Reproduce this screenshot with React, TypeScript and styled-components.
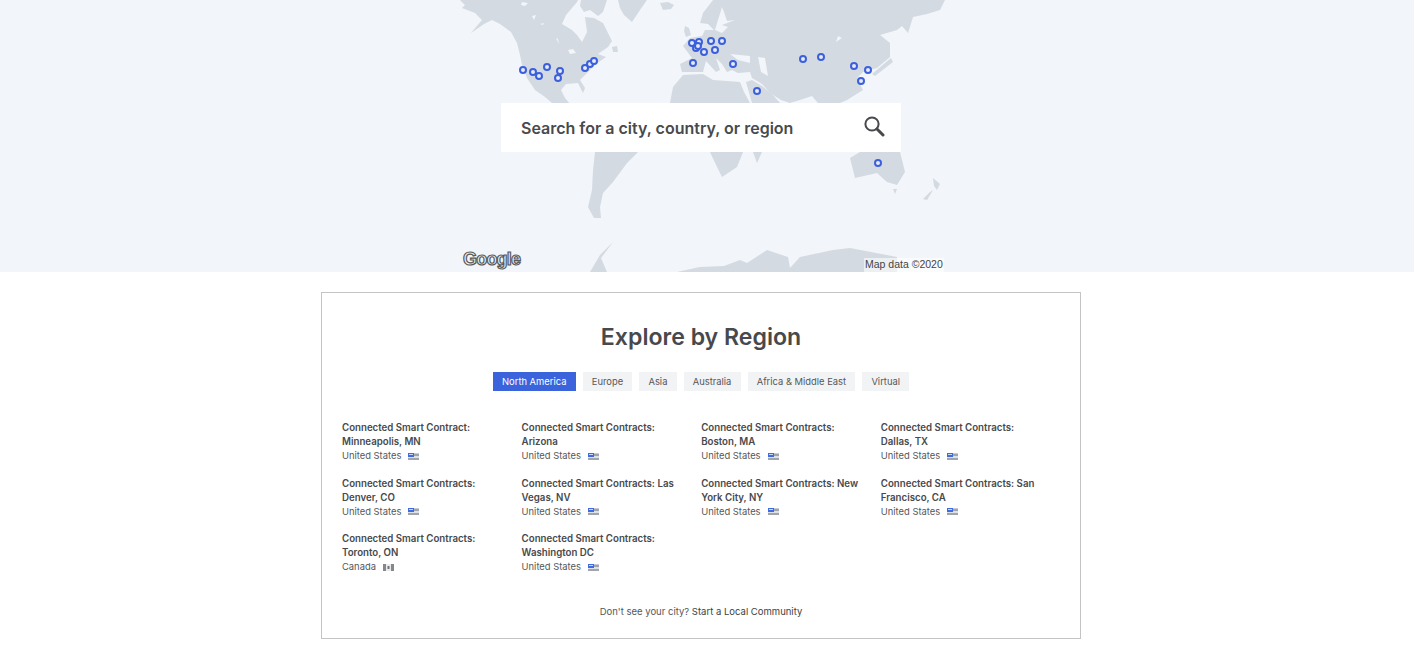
import React from "react";
import styled, { createGlobalStyle } from "styled-components";

const Global = createGlobalStyle`
  html, body { margin: 0; padding: 0; background: #fff; overflow: hidden; }
  * { box-sizing: border-box; }
`;

const Page = styled.div`
  width: 1414px;
  height: 649px;
  font-family: Inter, "Liberation Sans", sans-serif;
  color: #4a4a4a;
`;
const Hero = styled.section`
  position: relative;
  height: 272px;
  background: #f2f5fa;
  display: flex;
  justify-content: center;
  align-items: flex-start;
  padding: 103px 12px 0 0;
  overflow: hidden;
`;
const MapSvg = styled.svg`
  position: absolute;
  inset: 0;
`;
const SearchBox = styled.div`
  position: relative;
  width: 400px;
  height: 49px;
  background: #fff;
  display: flex;
  align-items: center;
  justify-content: space-between;
  padding: 0 16px 0 20px;
`;
const SearchText = styled.span`
  font-size: 16px;
  font-weight: 600;
  color: #484a4d;
`;
const SearchIcon = styled.svg`
  margin-top: -3px;
`;
const GoogleMark = styled.span`
  position: absolute;
  left: 463px;
  top: 249px;
  font-family: "Liberation Sans", sans-serif;
  font-size: 18px;
  font-weight: 700;
  letter-spacing: -0.8px;
  color: #eeeeee;
  -webkit-text-stroke: 1.2px #5a5a5a;
`;
const MapData = styled.span`
  position: absolute;
  left: 864px;
  top: 258px;
  width: 80px;
  height: 14px;
  padding-left: 1px;
  background: rgba(255, 255, 255, 0.6);
  font-family: "Liberation Sans", sans-serif;
  font-size: 10.5px;
  line-height: 13px;
  color: #444;
  white-space: nowrap;
`;
const Card = styled.section`
  width: 760px;
  height: 347px;
  margin: 20px 0 0 321px;
  border: 1px solid #c2c4c6;
  padding: 28px 20px 0;
`;
const Title = styled.h2`
  margin: 0;
  text-align: center;
  font-size: 23.1px;
  line-height: 32px;
  font-weight: 600;
  color: #47494c;
`;
const Tabs = styled.div`
  display: flex;
  justify-content: center;
  gap: 7px;
  margin-top: 19px;
`;
const Tab = styled.span<{ $active?: boolean }>`
  height: 19px;
  padding: 0 9.17px;
  font-size: 9.4px;
  line-height: 19px;
  white-space: nowrap;
  background: ${(p) => (p.$active ? "#3a63dc" : "#f2f3f5")};
  color: ${(p) => (p.$active ? "#fff" : "#55575a")};
`;
const Grid = styled.div`
  display: grid;
  grid-template-columns: repeat(4, 179.6px);
  grid-auto-rows: 42px;
  row-gap: 13.5px;
  margin-top: 30px;
`;
const Item = styled.div`
  font-size: 9.4px;
  line-height: 14px;
  padding-right: 18px;
`;
const ItemName = styled.div`
  font-size: 9.7px;
  font-weight: 600;
  color: #47494c;
`;
const Country = styled.div`
  display: flex;
  align-items: center;
  gap: 7px;
  color: #55575a;
`;
const Foot = styled.p`
  margin: 31px 0 0;
  text-align: center;
  font-size: 9.5px;
  line-height: 14px;
  color: #55575a;
`;
const FootLink = styled.span`
  color: #3c3e41;
`;

const land = [
  // North America
  "M460,0 L465,5 L462,8 L475,13 L482,20 L471,33 L484,24 L492,20 L500,24 L511,32 L517,43 L520,55 L522,65 L527,78 L535,90 L545,97 L552,103 L570,125 L575,110 L565,98 L561,90 L566,84 L578,83 L583,93 L585,88 L580,80 L588,72 L596,64 L606,57 L598,54 L608,47 L612,41 L603,23 L594,18 L585,17 L587,32 L582,42 L577,35 L572,30 L562,24 L566,15 L572,8 L577,2 L578,0 Z",
  // Newfoundland
  "M612,47 L617,46 L618,52 L613,52 Z",
  // Baffin and the arctic islands
  "M581,0 L607,0 L603,12 L598,16 L590,10 L584,12 L580,6 Z",
  // Greenland
  "M618,0 L647,0 L640,10 L632,22 L624,15 L620,8 Z",
  // Iceland
  "M660,3 L668,2 L674,5 L671,9 L663,10 Z",
  // UK and Ireland
  "M685,26 L689,28 L691,35 L686,37 L684,31 Z",
  // South America
  "M595,152 L638,152 L627,163 L613,182 L603,193 L600,207 L601,218 L594,218 L588,207 L592,190 L593,170 Z",
  // Eurasia
  "M713,0 L945,0 L940,10 L927,14 L913,17 L908,33 L902,26 L897,30 L880,35 L890,43 L890,57 L877,68 L863,72 L857,78 L863,90 L847,100 L840,103 L818,103 L812,96 L800,100 L790,103 L781,100 L770,93 L762,84 L752,78 L750,72 L738,73 L732,70 L727,72 L722,64 L716,58 L720,70 L716,72 L706,61 L703,72 L682,72 L680,64 L692,58 L683,46 L690,38 L702,36 L705,30 L714,30 L708,24 L700,23 L703,13 Z",
  // Africa
  "M670,103 L673,87 L683,75 L703,74 L713,80 L727,81 L740,82 L744,92 L750,103 Z",
  // Arabia
  "M746,82 L752,80 L762,86 L772,94 L780,103 L752,103 Z",
  "M710,152 L743,152 L737,167 L722,177 L717,167 Z",
  "M753,152 L762,152 L757,163 Z",
  // Japan
  "M891,58 L893,62 L875,76 L872,74 Z",
  // Australia
  "M850,158 L860,152 L900,152 L905,172 L897,185 L887,182 L877,173 L855,178 Z",
  "M893,189 L897,189 L895,194 Z",
  // New Zealand
  "M933,178 L940,184 L937,190 L934,186 Z",
  "M930,192 L933,190 L927,200 L923,199 Z",
  // Antarctica
  "M677,272 L700,267 L724,266 L740,260 L747,263 L767,250 L788,257 L790,268 L800,257 L833,250 L850,248 L897,257 L897,272 Z",
  "M613,242 L600,255 L590,272 L607,272 L601,258 Z",
];

const seas = [
  "M522,2 L528,3 L525,6 L521,5 Z",
  "M532,16 L536,15 L534,20 Z",
  "M540,24 L544,23 L543,25 Z",
  "M556,38 L558,39 L559,44 Z",
  "M722,7 L718,20 L715,30 L722,33 L728,27 L722,25 L735,20 L727,21 L724,12 Z",
  "M730,54 L750,56 L750,63 L738,60 Z",
  "M758,57 L765,58 L768,76 L761,72 Z",
  "M568,50 L573,49 L576,53 L570,54 Z",
  "M838,36 L842,38 L836,42 Z",
];

const pins: [number, number][] = [
  [523, 70], [533, 72], [539, 76], [547, 67], [560, 71], [558, 78], [585, 68], [590, 64], [594, 61],
  [692, 43], [699, 42], [696, 48], [698, 46], [704, 52], [711, 41], [722, 41], [715, 50], [693, 63],
  [733, 64], [757, 91], [803, 59], [821, 57], [854, 66], [868, 70], [861, 81], [878, 163],
];

const US = () => (
  <svg width="11" height="7" viewBox="0 0 11 7">
    <rect width="11" height="7" fill="#c9ccd2" />
    <rect y="1.5" width="11" height="1" fill="#777d88" />
    <rect y="3.5" width="11" height="1" fill="#f2f3f5" />
    <rect y="5.5" width="11" height="1" fill="#777d88" />
    <rect width="6" height="4" fill="#3f6be0" />
    <rect x="1" y="1" width="4" height="1" fill="#cdd8f5" />
  </svg>
);
const CA = () => (
  <svg width="11" height="7" viewBox="0 0 11 7">
    <rect width="11" height="7" fill="#e9ebec" />
    <rect width="3" height="7" fill="#85878a" />
    <rect x="8" width="3" height="7" fill="#85878a" />
    <rect x="4.5" y="2" width="2" height="3" fill="#6f7376" />
  </svg>
);

const places = [
  ["Connected Smart Contract: Minneapolis, MN", "United States"],
  ["Connected Smart Contracts: Arizona", "United States"],
  ["Connected Smart Contracts: Boston, MA", "United States"],
  ["Connected Smart Contracts: Dallas, TX", "United States"],
  ["Connected Smart Contracts: Denver, CO", "United States"],
  ["Connected Smart Contracts: Las Vegas, NV", "United States"],
  ["Connected Smart Contracts: New York City, NY", "United States"],
  ["Connected Smart Contracts: San Francisco, CA", "United States"],
  ["Connected Smart Contracts: Toronto, ON", "Canada"],
  ["Connected Smart Contracts: Washington DC", "United States"],
];
const regions = ["North America", "Europe", "Asia", "Australia", "Africa & Middle East", "Virtual"];

export default function App() {
  return (
    <Page>
      <Global />
      <Hero>
        <MapSvg width="1414" height="272" viewBox="0 0 1414 272">
          {land.map((d, i) => <path key={i} d={d} fill="#d3dae1" />)}
          {seas.map((d, i) => <path key={i} d={d} fill="#f2f5fa" />)}
          {pins.map(([x, y], i) => (
            <circle key={i} cx={x} cy={y} r="3" fill="#e6ebf7" stroke="#3b5fdd" strokeWidth="2" />
          ))}
        </MapSvg>
        <GoogleMark>Google</GoogleMark>
        <MapData>Map data ©2020</MapData>
        <SearchBox>
          <SearchText>Search for a city, country, or region</SearchText>
          <SearchIcon width="22" height="22" viewBox="0 0 22 22">
            <circle cx="9" cy="9" r="6.6" fill="none" stroke="#47494c" strokeWidth="2" />
            <path d="M14 14 L20 20" stroke="#47494c" strokeWidth="3" strokeLinecap="round" />
          </SearchIcon>
        </SearchBox>
      </Hero>
      <Card>
        <Title>Explore by Region</Title>
        <Tabs>
          {regions.map((r, i) => <Tab key={r} $active={i === 0}>{r}</Tab>)}
        </Tabs>
        <Grid>
          {places.map(([name, country]) => (
            <Item key={name}>
              <ItemName>{name}</ItemName>
              <Country>{country} {country === "Canada" ? <CA /> : <US />}</Country>
            </Item>
          ))}
        </Grid>
        <Foot>Don't see your city? <FootLink>Start a Local Community</FootLink></Foot>
      </Card>
    </Page>
  );
}
